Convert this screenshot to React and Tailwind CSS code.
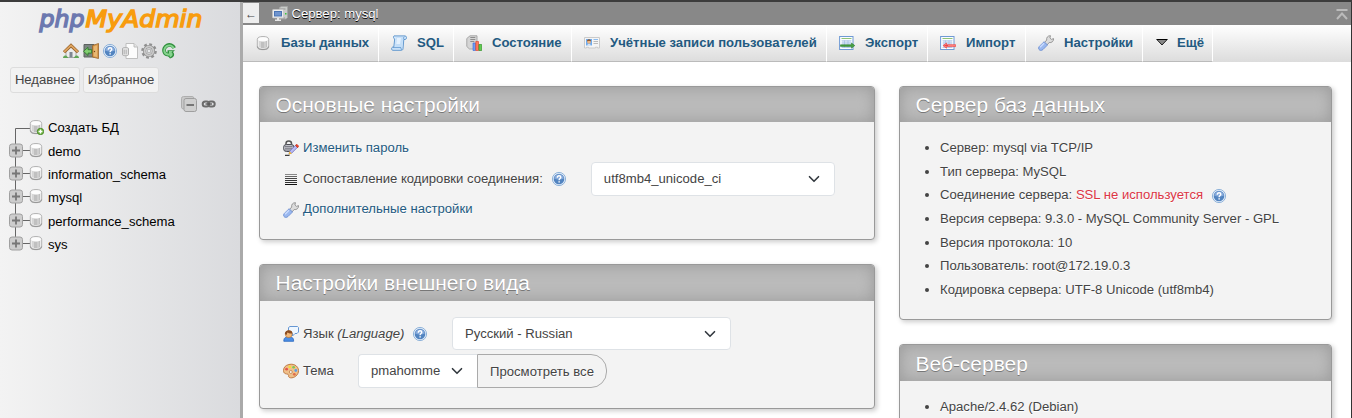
import React from "react";

function Svg({ size = 16, className = "", children }) {
  return (
    <svg width={size} height={size} viewBox="0 0 16 16" className={"block shrink-0 " + className}>
      {children}
    </svg>
  );
}

/* ---------- icons ---------- */

function DbShape() {
  return (
    <g>
      <path d="M2.300 4.500C2.300 2.300 4.600 1.500 8 1.500s5.700.8 5.700 3v7.500c0 1.900-2.300 2.700-5.700 2.700s-5.700-.8-5.700-2.700z" fill="#ececec" stroke="#aeaeae" strokeWidth=".9" />
      <path d="M2.600 11.500c0 2.200 2.500 2.900 5.400 2.900s5.400-.7 5.400-2.900" fill="none" stroke="#929292" />
      <path d="M4 6h2v6.700l-2-.6z" fill="#d6d6d6" />
      <path d="M6 6.300h3v6.700H6z" fill="#c0c0c0" />
      <path d="M9 6.300h1.500v6.600H9z" fill="#cecece" />
      <path d="M10.500 6H12v6.300l-1.500.5z" fill="#c0c0c0" />
      <ellipse cx="8" cy="4.300" rx="4.800" ry="2.100" fill="#fdfdfd" />
    </g>
  );
}

function DbIcon() {
  return <Svg><DbShape /></Svg>;
}

function DbNewIcon() {
  return (
    <Svg>
      <DbShape />
      <circle cx="12.500" cy="12.500" r="3.200" fill="#72b843" stroke="#3f7f1f" strokeWidth=".8" />
      <path d="M12.500 10.600v3.800M10.600 12.500h3.800" stroke="#fff" strokeWidth="1.300" />
    </Svg>
  );
}

function HomeIcon() {
  return (
    <Svg>
      <path d="M3 8l5-4.500L13 8v6.500H3z" fill="#ececec" stroke="#9d9d9d" strokeWidth=".8" />
      <path d="M6.500 9h3v5.500h-3z" fill="#7f8791" />
      <path d="M0 15c0-2.400 2-3.100 3.500-2.200l2 2.200zM16 15c0-2.400-2-3.100-3.500-2.200l-2 2.200z" fill="#5fa556" />
      <path d="M1 9.200L8 2.500l7 6.700" fill="none" stroke="#98622c" strokeWidth="3.200" />
      <path d="M1.200 8.800L8 2.400l6.800 6.400" fill="none" stroke="#dfa661" strokeWidth="1.700" />
    </Svg>
  );
}

function ExitIcon() {
  return (
    <Svg>
      <path d="M1 1.500h10V14H1z" fill="#7b8581" stroke="#5c625f" />
      <path d="M9.500 2.500l6-2v15l-6-1.500z" fill="#d99b4e" stroke="#9a6429" strokeWidth=".8" />
      <path d="M10.800 3.500l3.200-1v11.500l-3.200-1z" fill="#e8b873" />
      <circle cx="11.500" cy="8.500" r=".7" fill="#704515" />
      <path d="M.5 8.300L5 4.300v2.400h3.700v3.400H5v2.400z" fill="#83cf72" stroke="#2f7b2b" strokeWidth=".9" />
    </Svg>
  );
}

function HelpIcon() {
  return (
    <Svg>
      <circle cx="8" cy="8" r="6.600" fill="#e3edf9" stroke="#85abd6" strokeWidth=".9" />
      <circle cx="8" cy="8" r="5.300" fill="#5284c0" />
      <path d="M3.100 7.500a5 5 0 019.800 0c-3 1.300-6.800 1.300-9.800 0z" fill="#86aadb" />
      <path d="M6.300 6.700c0-1.300.6-1.900 1.800-1.900s1.700.6 1.700 1.500c0 1.300-1.700 1.300-1.700 2.900" fill="none" stroke="#fff" strokeWidth="1.400" />
      <path d="M7.400 10.200h1.500v1.400H7.400z" fill="#fff" />
    </Svg>
  );
}

function DocsIcon() {
  return (
    <Svg>
      <path d="M4 .5h8L15.500 4v11.500H4z" fill="#fcfcfc" stroke="#b9b9b9" strokeWidth=".9" />
      <path d="M12 .5V4h3.500" fill="#e4e4e4" stroke="#b9b9b9" strokeWidth=".9" />
      <path d="M.5 5.500c0-1.300 6-1.300 6 0v6.200c0 1.300-6 1.300-6 0z" fill="#e2e2e2" stroke="#a5a5a5" strokeWidth=".9" />
      <path d="M2.200 6.700v4.500M4.200 6.700v4.500" stroke="#b0b0b0" />
    </Svg>
  );
}

function GearIcon() {
  return (
    <Svg>
      <circle cx="8" cy="8" r="6.600" fill="none" stroke="#909090" strokeWidth="2.400" strokeDasharray="2.800 2.384" />
      <circle cx="8" cy="8" r="4.500" fill="none" stroke="#8a8a8a" strokeWidth="3.200" />
      <circle cx="8" cy="8" r="4.400" fill="none" stroke="#c9c9c9" strokeWidth="2" />
      <circle cx="8" cy="8" r="1.900" fill="#e8eaeb" stroke="#929292" strokeWidth=".7" />
    </Svg>
  );
}

function ReloadIcon() {
  return (
    <Svg>
      <path d="M13.200 5A5 5 0 103.600 9.500C4.300 11 5.800 11.700 8 11.700" fill="none" stroke="#2f8f3c" strokeWidth="3.800" />
      <path d="M6.500 11V7.200H14l-2 1.900c2.400 2.400.8 5.900-3 6.400l-2.500-3z" fill="#2f8f3c" />
      <path d="M12.700 5.200A4.700 4.700 0 103.800 9.500C4.500 10.900 6 11.700 8.500 11.700" fill="none" stroke="#86d38e" strokeWidth="2" />
      <path d="M8 10.500V8.100h3.800l-1.300 1.200c1.900 1.700 1.400 3.900-1.500 5.100" fill="#86d38e" />
    </Svg>
  );
}

function CollapseIcon() {
  return (
    <Svg>
      <rect x=".5" y=".5" width="12.500" height="12.500" rx="2" fill="#c9c9c9" stroke="#aeaeae" />
      <rect x="3" y="2.500" width="12.500" height="13" rx="2" fill="#cfcfcf" stroke="#9f9f9f" />
      <path d="M5.500 9h7.500" stroke="#666" strokeWidth="1.700" />
    </Svg>
  );
}

function LinkIcon() {
  return (
    <Svg>
      <rect x="1.700" y="5.500" width="6.500" height="5" rx="2.500" fill="none" stroke="#6c6c6c" strokeWidth="2" />
      <rect x="7.200" y="5.500" width="6.500" height="5" rx="2.500" fill="none" stroke="#6c6c6c" strokeWidth="2" />
      <path d="M4.500 8h6.500" stroke="#555" strokeWidth="1.300" />
    </Svg>
  );
}

function ServerIcon() {
  return (
    <Svg>
      <path d="M7.500 1.500l2-1h6v11l-1.500 1.500H7.500z" fill="#c9cbc9" stroke="#a5a5a5" strokeWidth=".8" />
      <path d="M8 3h5.500M8 12h5" stroke="#888" strokeWidth=".8" />
      <path d="M13 7h1.500v1.500H13z" fill="#38c63c" />
      <rect x=".6" y="3.600" width="10.800" height="8.300" rx=".5" fill="#f0f0f0" stroke="#c4c4c4" strokeWidth=".8" />
      <path d="M2 5h8v5.500H2z" fill="#4a74b4" />
      <path d="M3 6h6v3.500H3z" fill="#6f94ce" />
      <path d="M5 12h2v1.500h2V15H3v-1.500h2z" fill="#e6e6e6" />
    </Svg>
  );
}

function SqlIcon() {
  return (
    <Svg>
      <path d="M3 .9h11c2 0 2 3.400.2 3.600h-1.400l-.8 9.300c-.1 1-.8 1.500-1.800 1.500H1.800c-1.700 0-1.500-3 0-3.300h1L3.700 4C2.500 4 2 1.200 3 .9z" fill="#d3e7fb" stroke="#5590cb" strokeWidth=".9" />
      <path d="M5 2.200h7.200L11.200 12H4.200z" fill="#c3def8" />
      <path d="M6 3h4L9 9H5.300z" fill="#e4f1fe" />
      <path d="M2 12.600h8c0 1 .1 1.800.6 2.300" fill="none" stroke="#5590cb" strokeWidth=".8" />
      <path d="M13 4.200c-.6-.7-.5-1.800.3-2.500" fill="none" stroke="#5590cb" strokeWidth=".9" />
    </Svg>
  );
}

function StatusIcon() {
  return (
    <Svg>
      <path d="M.8 3.500L4 .8h7V14H3.500L.8 11.500z" fill="#d5d5d5" stroke="#a2a2a2" strokeWidth=".9" />
      <path d="M4.300 2.500h5M4.300 4.500h5M4.300 6.500h4" stroke="#8d8d8d" />
      <path d="M7 8h2.500v7.500H7z" fill="#6d9cf5" stroke="#376ad3" strokeWidth=".6" />
      <path d="M9.800 6.500h2.700v9H9.800z" fill="#ff7b5b" stroke="#df3822" strokeWidth=".6" />
      <path d="M12.900 9.500h2.800v6h-2.800z" fill="#60cc51" stroke="#23881b" strokeWidth=".6" />
    </Svg>
  );
}

function UsersIcon() {
  return (
    <Svg>
      <path d="M.5 2.500h15v10.500h-2v-.8h-2v.8h-7v-.8h-2v.8h-2z" fill="#f5f5f5" stroke="#cacaca" />
      <path d="M2 4h6v6.500H2z" fill="#6fabed" />
      <circle cx="5" cy="6.800" r="1.900" fill="#edb583" />
      <path d="M3 6.600c0-3 4-3 4 0-1-1-3-1-4 0z" fill="#8a4e20" />
      <path d="M3.200 10.500c0-1.800 3.600-1.800 3.600 0z" fill="#f2f6fb" />
      <path d="M9.500 4.500H14" stroke="#8bbcf0" />
      <path d="M9.500 6.500H14M9.500 8.500H14" stroke="#bbb" />
    </Svg>
  );
}

function TableShape() {
  return (
    <g>
      <rect x=".6" y="1.500" width="13.400" height="13" fill="#fbfdff" stroke="#6f9ad4" />
      <path d="M2.500 3.500h10" stroke="#8fc377" />
      <path d="M3 5.500h9v7H3z" fill="#dde8f7" />
      <path d="M2.500 5.800h10M2.500 8h10M2.500 10.200h10M2.500 12.500h10M5.500 5.500v7M9 5.500v7" stroke="#9fbce2" strokeWidth=".7" />
    </g>
  );
}

function ExportIcon() {
  return (
    <Svg>
      <TableShape />
      <path d="M1.500 9.800h11V8l3.300 2.600-3.300 2.600v-1.800h-11z" fill="#49a344" stroke="#1f6e20" strokeWidth=".5" />
    </Svg>
  );
}

function ImportIcon() {
  return (
    <Svg>
      <TableShape />
      <path d="M15.700 9.700H6.500V8L3 10.600l3.500 2.600v-1.600h9.200z" fill="#ff8a85" stroke="#ee3434" strokeWidth=".6" />
      <path d="M8 10.600H4.500" stroke="#e2363a" strokeWidth=".9" />
    </Svg>
  );
}

function WrenchIcon() {
  return (
    <Svg>
      <path d="M6.500 7.500L8.700 5C8.200 2.700 9.700.6 12.500.7l-.6 2.300 1.400 1.400 2.300-.8c.2 2.700-2.100 4.500-4.400 3.900L9 10z" fill="#dcdcdc" stroke="#8f8f8f" strokeWidth=".9" />
      <path d="M6.200 6.700L9.500 10 5 14.500c-2.700 2.500-6-.6-3.600-3.200z" fill="#9ab8ef" stroke="#6f91d2" strokeWidth=".9" />
      <path d="M6 8.300l-4 4" stroke="#cbdcff" strokeWidth="1.400" />
    </Svg>
  );
}

function MoreIcon() {
  return (
    <Svg>
      <path d="M3.200 5h9.600L8 10z" fill="#888" />
      <path d="M2.500 4.500h11" stroke="#000" />
      <path d="M3 4.700l5 5.300 5-5.300" fill="none" stroke="#222" />
    </Svg>
  );
}

function PasswordIcon() {
  return (
    <Svg>
      <path d="M3 5.500v-2C3 .3 8.500.3 8.500 3.500v2" fill="none" stroke="#555" strokeWidth="1.500" />
      <rect x=".6" y="4.500" width="10.400" height="7" rx="2.800" fill="#bfc0c7" stroke="#4b4c54" />
      <path d="M2 6.500h7.500M2 8.300h7M2 10h6" stroke="#6e6f78" strokeWidth=".8" />
      <path d="M6 14l.8-3 5.700-5.700 2.100 1.900-6 6z" fill="#b9baf5" stroke="#6466b4" strokeWidth=".7" />
      <path d="M12.500 5.300l1.400-1 1.900 2-1.200 1.400z" fill="#f1452a" stroke="#c0230e" strokeWidth=".6" />
      <path d="M6.500 11.300l2.300 2.100-3.200 1.200z" fill="#f1b72e" />
      <path d="M2 15.300h4.500" stroke="#111" />
    </Svg>
  );
}

function CollationIcon() {
  return (
    <Svg>
      <path d="M2 3.500h12" stroke="#888" />
      <path d="M2 5.500h12" stroke="#666" />
      <path d="M2 7.500h12" stroke="#444" />
      <path d="M2 9.500h12M2 11.500h12" stroke="#333" />
      <path d="M2 13.500h12" stroke="#111" />
    </Svg>
  );
}

function LanguageIcon() {
  return (
    <Svg>
      <path d="M5.500 1.500l1.500-1h7.500l1 1V6l-1.500 1.500h-2L9.500 10V7.500L5.500 6z" fill="#eff7ff" stroke="#6697d3" />
      <path d="M.8 15.300c0-3.500 1.400-4.300 5-4.300s4.800.8 4.800 4.300z" fill="#4c8ee5" stroke="#2765bd" strokeWidth=".8" />
      <circle cx="5.700" cy="8.200" r="3.400" fill="#f3b879" stroke="#b36e2b" strokeWidth=".6" />
      <path d="M1.800 8c0-5 7.800-5 7.800-.5-2.800.3-4-.5-5.200-1L3.500 9z" fill="#8b4c20" />
    </Svg>
  );
}

function ThemeIcon() {
  return (
    <Svg>
      <path d="M6 1.500c6-1.500 10.500 3 9.400 7.500-1 4.500-6 6.800-9 5.500-1.800-.8.3-2.500-1.400-3.200C3.200 10.700.5 11 .5 7.500c0-3 2-5.300 5.500-6z" fill="#efc08a" stroke="#bb7238" strokeWidth=".9" />
      <circle cx="7.800" cy="9" r="1.500" fill="#f3f3f3" stroke="#bb7238" strokeWidth=".7" />
      <circle cx="3.600" cy="6.200" r="1.400" fill="#e7554a" />
      <circle cx="6.800" cy="3.900" r="1.300" fill="#f6dd31" />
      <circle cx="10.600" cy="4.300" r="1.300" fill="#7cc653" />
      <circle cx="12.800" cy="7.500" r="1.400" fill="#5a9de5" />
      <circle cx="11.300" cy="11.300" r="1.400" fill="#df6d4a" />
    </Svg>
  );
}

function Chevron() {
  return (
    <svg width="12" height="12" viewBox="0 0 16 16" className="block shrink-0">
      <path fill="none" stroke="#343a40" strokeLinecap="round" strokeLinejoin="round" strokeWidth="2.200" d="m2 5 6 6 6-6" />
    </svg>
  );
}

/* ---------- sidebar ---------- */

function Logo() {
  return (
    <svg width="170" height="32" viewBox="0 0 170 32" className="block overflow-visible font-[DejaVu_Sans,sans-serif] text-[22.500px] italic" strokeWidth="1.400">
      <text x="2.500" y="23.300" textLength="45" lengthAdjust="spacingAndGlyphs" fill="#6c78af" stroke="#6c78af">php</text>
      <text x="48.500" y="23.300" textLength="117" lengthAdjust="spacingAndGlyphs" fill="#f89c0e" stroke="#f89c0e">MyAdmin</text>
    </svg>
  );
}

function Branch({ first, last }) {
  return (
    <svg width="30" height="24" viewBox="0 0 30 24" className="block shrink-0 overflow-visible">
      <path d={first ? "M15.500 24V12.500H30" : last ? "M15.500 0V10.500H30" : "M15.500 0V24M15.500 10.500H30"} fill="none" stroke="#666" />
      {!first && (
        <g>
          <rect x="9.500" y="4" width="13" height="13" rx="2.500" fill="#cdcdcd" stroke="#a0a0a0" />
          <path d="M12 10.500h8M16 6.500v8" stroke="#777" strokeWidth="1.800" />
        </g>
      )}
    </svg>
  );
}

function TreeRow({ name, first, last, tall }) {
  return (
    <div className={"flex items-start " + (tall ? "h-6" : "h-[23px]")}>
      <Branch first={first} last={last} />
      <div className={first ? "-ml-0.5 mt-[3px]" : "-ml-0.5 mt-0.5"}>{first ? <DbNewIcon /> : <DbIcon />}</div>
      <span className="ml-1 mt-px leading-[22px] text-black whitespace-nowrap">{name}</span>
    </div>
  );
}

function SideButton({ className, children }) {
  return (
    <div className={"flex h-[26px] items-center justify-center rounded-[3px] border border-[#ddd] bg-[#f2f2f2] text-[#444] whitespace-nowrap " + className}>
      {children}
    </div>
  );
}

function Sidebar() {
  return (
    <aside className="flex h-full w-60 shrink-0 flex-col overflow-hidden bg-linear-to-r from-[#f3f3f3] to-[#dadbde]">
      <div className="mt-0.5 pl-[37px]"><Logo /></div>
      <div className="mt-[7px] flex gap-[3.600px] pl-[63px]">
        <HomeIcon /><ExitIcon /><HelpIcon /><DocsIcon /><GearIcon /><ReloadIcon />
      </div>
      <div className="mt-2 flex gap-[3px] pl-[10px]">
        <SideButton className="w-[70px]">Недавнее</SideButton>
        <SideButton className="w-[76px]">Избранное</SideButton>
      </div>
      <div className="mt-[3px] flex gap-1 pl-[181px]">
        <CollapseIcon /><LinkIcon />
      </div>
      <div className="mt-1 flex flex-col">
        <TreeRow name="Создать БД" first tall />
        <TreeRow name="demo" />
        <TreeRow name="information_schema" />
        <TreeRow name="mysql" tall />
        <TreeRow name="performance_schema" />
        <TreeRow name="sys" last />
      </div>
    </aside>
  );
}

/* ---------- main area ---------- */

function Tab({ width, icon, children }) {
  return (
    <li className={"flex items-center border-r border-b border-r-white border-b-[#bbb] pl-3 " + width}>
      {icon}
      <span className="ml-[10px] mb-px whitespace-nowrap font-bold text-[#235a81]">{children}</span>
    </li>
  );
}

function Card({ title, className, headClass, children }) {
  return (
    <section className={"flex shrink-0 flex-col overflow-hidden rounded-[4px] border border-[#999] bg-[#f3f3f3] shadow-[2px_2px_5px_#ccc] " + className}>
      <h2 className={"flex shrink-0 items-center bg-[#bbb] pl-[15.500px] text-[20.960px] text-white shadow-[inset_0_0_15px_#999] [text-shadow:0_1px_0_#777] " + headClass}>
        <span className="whitespace-nowrap">{title}</span>
      </h2>
      {children}
    </section>
  );
}

function Select({ className, children }) {
  return (
    <div className={"flex items-center justify-between border border-[#dee2e6] bg-white pl-3 " + className}>
      <span className="whitespace-nowrap">{children}</span>
      <Chevron />
    </div>
  );
}

const serverInfo = [
  "Сервер: mysql via TCP/IP",
  "Тип сервера: MySQL",
  null,
  "Версия сервера: 9.3.0 - MySQL Community Server - GPL",
  "Версия протокола: 10",
  "Пользователь: root@172.19.0.3",
  "Кодировка сервера: UTF-8 Unicode (utf8mb4)",
];

function InfoItem({ children }) {
  return (
    <li className="flex h-[23.680px] items-center whitespace-nowrap">
      <span className="ml-[25px] mr-[11px] size-1 shrink-0 rounded-full bg-[#444]" />
      {children}
    </li>
  );
}

export default function App() {
  return (
    <div className="flex h-[418px] w-[1352px] flex-col overflow-hidden bg-white font-['Liberation_Sans',Arial,sans-serif] text-[13.120px] leading-normal text-[#444]">
      <div className="h-0.5 shrink-0 bg-[#3c3c3c]" />
      <div className="flex min-h-0 flex-1">
        <Sidebar />
        <div className="w-[3px] shrink-0 bg-[#aaa]" />
        <main className="flex min-w-0 flex-1 flex-col">
          <header className="flex h-[23px] shrink-0 items-center bg-[#888]">
            <div className="mt-px flex h-5 w-4 items-center justify-center self-start bg-[#eee] pt-0.5 text-[12px]">←</div>
            <div className="ml-[13px]"><ServerIcon /></div>
            <span className="ml-[3.500px] mt-px text-white [text-shadow:0_1px_0_#000]">Сервер: mysql</span>
            <svg width="12" height="11" viewBox="0 0 12 11" className="ml-auto mr-[3px] mt-px block">
              <path d="M.5 1h11M1 10l5-5.500L11 10" fill="none" stroke="#bbb" strokeWidth="2" />
            </svg>
          </header>
          <ul className="flex h-[37px] shrink-0 divide-x divide-[#ccc] bg-linear-to-b from-white to-[#dcdcdc]">
            <Tab width="w-[136px]" icon={<DbIcon />}>Базы данных</Tab>
            <Tab width="w-[75px]" icon={<SqlIcon />}>SQL</Tab>
            <Tab width="w-[118px]" icon={<StatusIcon />}>Состояние</Tab>
            <Tab width="w-[255px]" icon={<UsersIcon />}>Учётные записи пользователей</Tab>
            <Tab width="w-[101px]" icon={<ExportIcon />}>Экспорт</Tab>
            <Tab width="w-[98px]" icon={<ImportIcon />}>Импорт</Tab>
            <Tab width="w-[117px]" icon={<WrenchIcon />}>Настройки</Tab>
            <li className="flex w-[70px] items-center border-r border-b border-r-white border-b-[#bbb] pl-[11px]">
              <MoreIcon />
              <span className="mb-px ml-[7px] whitespace-nowrap font-bold text-[#235a81]">Ещё</span>
            </li>
          </ul>
          <div className="flex min-h-0 flex-1 items-start gap-6 overflow-hidden pl-4 pt-6 [text-shadow:0_1px_0_#fff]">
            <div className="flex w-[616px] flex-col gap-6">
              <Card title="Основные настройки" className="h-[154px]" headClass="h-[35px]">
                <div className="flex flex-col pl-[23px] pt-4">
                  <div className="flex h-5 items-center">
                    <PasswordIcon />
                    <span className="ml-1 text-[#235a81]">Изменить пароль</span>
                  </div>
                  <div className="mt-1 flex h-[34px] items-center">
                    <CollationIcon />
                    <span className="ml-1 mb-px whitespace-nowrap">Сопоставление кодировки соединения:</span>
                    <div className="ml-2"><HelpIcon /></div>
                    <Select className="ml-6 h-[34px] w-[244px] rounded-[4px] pr-[14px] pb-px">utf8mb4_unicode_ci</Select>
                  </div>
                  <div className="mt-1 flex h-5 items-center">
                    <WrenchIcon />
                    <span className="ml-1 mb-0.5 text-[#235a81]">Дополнительные настройки</span>
                  </div>
                </div>
              </Card>
              <Card title="Настройки внешнего вида" className="h-[145px]" headClass="h-9">
                <div className="flex flex-col pl-[23px] pt-4">
                  <div className="flex h-[33px] items-center">
                    <LanguageIcon />
                    <span className="ml-1 w-[101px] whitespace-nowrap">Язык <i>(Language)</i></span>
                    <div className="ml-2"><HelpIcon /></div>
                    <Select className="ml-6 h-[33px] w-[279px] rounded-[4px] pr-[14px]">Русский - Russian</Select>
                  </div>
                  <div className="mt-1 flex h-[34px] items-center">
                    <ThemeIcon />
                    <span className="ml-1 mb-px w-[55px]">Тема</span>
                    <Select className="h-[34px] w-[119px] rounded-l-[4px] border-r-0 pr-[14px] pb-px">pmahomme</Select>
                    <div className="flex h-[34px] w-[130px] items-center justify-center rounded-r-2xl border border-[#aaa] bg-[#f3f3f3] pt-px whitespace-nowrap">Просмотреть все</div>
                  </div>
                </div>
              </Card>
            </div>
            <div className="flex w-[433px] flex-col gap-6">
              <Card title="Сервер баз данных" className="h-[234px]" headClass="h-[35px]">
                <ul className="flex flex-col pt-[14px]">
                  {serverInfo.map((text, i) => (
                    <InfoItem key={i}>
                      {text ?? (
                        <>
                          <span>Соединение сервера: <span className="text-[#dc3545]">SSL не используется</span></span>
                          <div className="ml-2 mt-0.5"><HelpIcon /></div>
                        </>
                      )}
                    </InfoItem>
                  ))}
                </ul>
              </Card>
              <Card title="Веб-сервер" className="h-[120px]" headClass="h-9 pt-0.5">
                <ul className="flex flex-col pt-[14px]">
                  <InfoItem>Apache/2.4.62 (Debian)</InfoItem>
                </ul>
              </Card>
            </div>
          </div>
        </main>
        <div className="w-px shrink-0 bg-[#333]" />
      </div>
    </div>
  );
}
